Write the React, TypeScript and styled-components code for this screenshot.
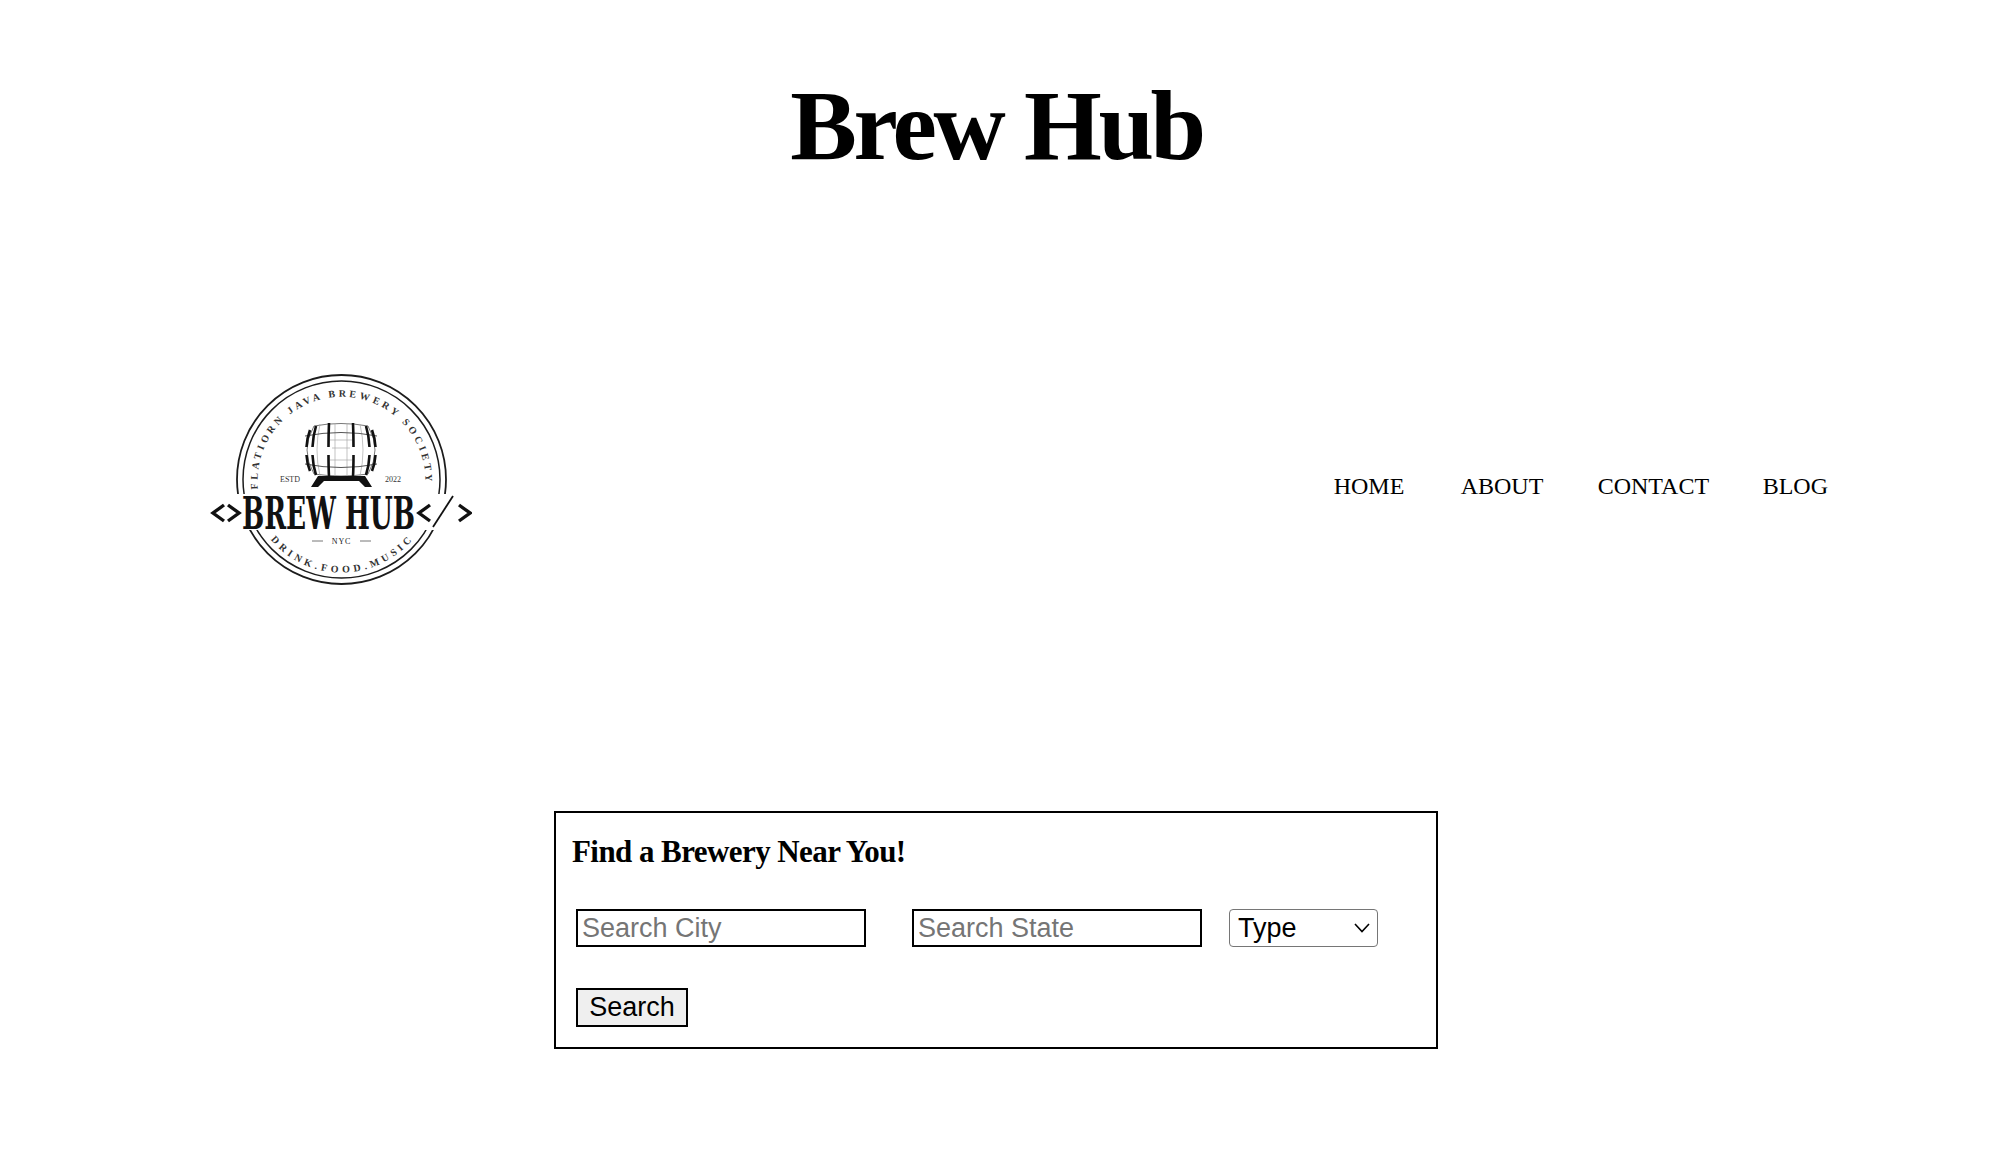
import styled, { createGlobalStyle } from "styled-components";

const GlobalStyle = createGlobalStyle`
  html, body {
    margin: 0;
    padding: 0;
    background: #fff;
    color: #000;
  }
`;

const Page = styled.div`
  width: 1998px;
  height: 1150px;
  overflow: hidden;
  font-family: "Liberation Serif", serif;
`;

const Title = styled.h1`
  margin: 0;
  padding: 67px 5px 0 0;
  height: 260px;
  box-sizing: border-box;
  text-align: center;
  font-size: 100px;
  line-height: 118px;
  font-weight: 700;
  letter-spacing: -3.4px;
`;

const Header = styled.header`
  display: flex;
  align-items: center;
  justify-content: space-between;
  height: 340px;
  padding: 0 170px 0 210px;
  margin-top: 50px;
`;

const Nav = styled.nav`
  display: grid;
  grid-template-columns: 127px 137px 165px auto;
  margin-top: 12px;
`;

const NavLink = styled.a`
  color: #000;
  font-size: 24px;
  text-decoration: none;
`;

const SearchBox = styled.form`
  box-sizing: border-box;
  width: 884px;
  height: 238px;
  margin: 161px 0 0 554px;
  padding: 21px 16px;
  border: 2px solid #000;
`;

const SearchTitle = styled.h3`
  margin: 0 0 39px;
  font-size: 31px;
  line-height: 36px;
  font-weight: 700;
  letter-spacing: -0.57px;
`;

const Row = styled.div`
  display: flex;
  align-items: center;
  padding-left: 4px;
  margin-bottom: 41px;
`;

const TextInput = styled.input`
  box-sizing: border-box;
  width: 290px;
  height: 38px;
  margin-right: 46px;
  padding: 0 4px;
  border: 2.5px solid #000;
  border-radius: 0;
  background: #fff;
  font-family: "Liberation Sans", Arial, sans-serif;
  font-size: 27px;
  outline: none;

  &::placeholder {
    color: #757575;
    opacity: 1;
  }

  &:last-of-type {
    margin-right: 27px;
  }
`;

const SelectWrap = styled.div`
  position: relative;
  width: 149px;
  height: 38px;
`;

const TypeSelect = styled.select`
  appearance: none;
  box-sizing: border-box;
  width: 100%;
  height: 100%;
  padding: 0 8px;
  border: 1.5px solid #767676;
  border-radius: 4px;
  background: #fff;
  color: #000;
  font-family: "Liberation Sans", Arial, sans-serif;
  font-size: 27px;
`;

const Chevron = styled.svg`
  position: absolute;
  top: 13px;
  right: 7px;
  width: 18px;
  height: 12px;
  pointer-events: none;
`;

const SearchButton = styled.button`
  display: block;
  box-sizing: border-box;
  width: 112px;
  height: 39px;
  margin-left: 4px;
  padding: 0;
  border: 2.5px solid #000;
  border-radius: 0;
  background: #efefef;
  color: #000;
  font-family: "Liberation Sans", Arial, sans-serif;
  font-size: 27px;
`;

const LogoMark = styled.svg`
  display: block;
  width: 262px;
  height: 212px;
`;

const serif = "'Liberation Serif', serif";

const Logo = () => (
  <LogoMark viewBox="0 0 262 212" aria-label="Brew Hub logo">
    <defs>
      <path id="ringTop" d="M 48 116 A 84 84 0 1 1 215 116" />
      <path id="ringBottom" d="M 58 162.5 A 93 93 0 0 0 205 162.5" />
    </defs>
    <g fill="none" stroke="#1c1c1c">
      <circle cx="131.5" cy="105.5" r="104.5" strokeWidth="1.8" />
      <circle cx="131.5" cy="105.5" r="98.5" strokeWidth="1.5" />
    </g>
    <text fontFamily={serif} fontWeight="700" fontSize="10" fill="#333">
      <textPath href="#ringTop" startOffset="1" textLength="272">
        FLATIORN JAVA BREWERY SOCIETY
      </textPath>
    </text>

    {/* barrel */}
    <path d="M 104 52 Q 131 47 158 52 Q 172 76 158 100 Q 131 104 104 100 Q 90 76 104 52 Z" fill="#fff" stroke="#555" strokeWidth="0.8" />
    <g fill="none" stroke="#aaa" strokeWidth="0.7">
      <path d="M 110 50 Q 104 76 110 102 M 125 49 V 103 M 137 49 V 103 M 150 50 Q 156 76 150 102" />
      <path d="M 120 66 H 142 M 120 86 H 142 M 122 74 H 140" />
    </g>
    <g fill="none" stroke="#555" strokeWidth="1">
      <path d="M 95 62 Q 131 55 167 62" />
      <path d="M 95 90 Q 131 97 167 90" />
    </g>
    <g fill="none" stroke="#111" strokeWidth="2.6">
      <path d="M 100 56 Q 97 64 96.5 73 M 96.5 81 Q 97 90 100 97" />
      <path d="M 106 52 Q 103 62 102.5 73 M 102.5 81 Q 103 92 106 101" />
      <path d="M 119 49 Q 118.5 60 118.5 73 M 118.5 81 Q 118.5 94 119 103" />
      <path d="M 143 49 Q 143.5 60 143.5 73 M 143.5 81 Q 143.5 94 143 103" />
      <path d="M 156 52 Q 159 62 159.5 73 M 159.5 81 Q 159 92 156 101" />
      <path d="M 162 56 Q 165 64 165.5 73 M 165.5 81 Q 165 90 162 97" />
    </g>
    <path d="M 101 113 L 108 102 H 155 L 162 113 H 155 L 149 107 H 114 L 108 113 Z" fill="#111" />

    <text x="80" y="108" textAnchor="middle" fontFamily={serif} fontSize="8" fill="#333">
      ESTD
    </text>
    <text x="183" y="108" textAnchor="middle" fontFamily={serif} fontSize="8" fill="#333">
      2022
    </text>

    <rect x="0" y="120" width="262" height="36" fill="#fff" />
    <text
      x="32"
      y="155"
      textLength="173"
      lengthAdjust="spacingAndGlyphs"
      fontFamily="'DejaVu Serif Condensed', 'DejaVu Serif', serif"
      fontWeight="700"
      fontSize="45"
      fill="#111"
    >
      BREW HUB
    </text>
    <g fill="none" stroke="#111" strokeWidth="3.4">
      <path d="M 14 131 L 3 139 L 14 147" />
      <path d="M 18 131 L 29 139 L 18 147" />
      <path d="M 220 131 L 209 139 L 220 147" />
      <path d="M 249 131 L 260 139 L 249 147" />
    </g>
    <path d="M 223 153 L 243 122" stroke="#111" strokeWidth="1.8" />

    <path d="M 102 167 H 113 M 150 167 H 161" stroke="#777" strokeWidth="1" />
    <text x="131.5" y="170" textAnchor="middle" fontFamily={serif} fontSize="8" fill="#222" letterSpacing="0.8">
      NYC
    </text>
    <text fontFamily={serif} fontWeight="700" fontSize="10" fill="#333">
      <textPath href="#ringBottom" startOffset="4" textLength="160">
        DRINK.FOOD.MUSIC
      </textPath>
    </text>
  </LogoMark>
);

export default function App() {
  return (
    <Page>
      <GlobalStyle />
      <Title>Brew Hub</Title>
      <Header>
        <Logo />
        <Nav>
          <NavLink href="#home">HOME</NavLink>
          <NavLink href="#about">ABOUT</NavLink>
          <NavLink href="#contact">CONTACT</NavLink>
          <NavLink href="#blog">BLOG</NavLink>
        </Nav>
      </Header>
      <SearchBox onSubmit={(e) => e.preventDefault()}>
        <SearchTitle>Find a Brewery Near You!</SearchTitle>
        <Row>
          <TextInput placeholder="Search City" />
          <TextInput placeholder="Search State" />
          <SelectWrap>
            <TypeSelect defaultValue="">
              <option value="">Type</option>
              <option value="micro">Micro</option>
              <option value="brewpub">Brewpub</option>
            </TypeSelect>
            <Chevron viewBox="0 0 18 12">
              <path d="M 2 2 L 9 9.5 L 16 2" fill="none" stroke="#000" strokeWidth="1.6" />
            </Chevron>
          </SelectWrap>
        </Row>
        <SearchButton type="submit">Search</SearchButton>
      </SearchBox>
    </Page>
  );
}
